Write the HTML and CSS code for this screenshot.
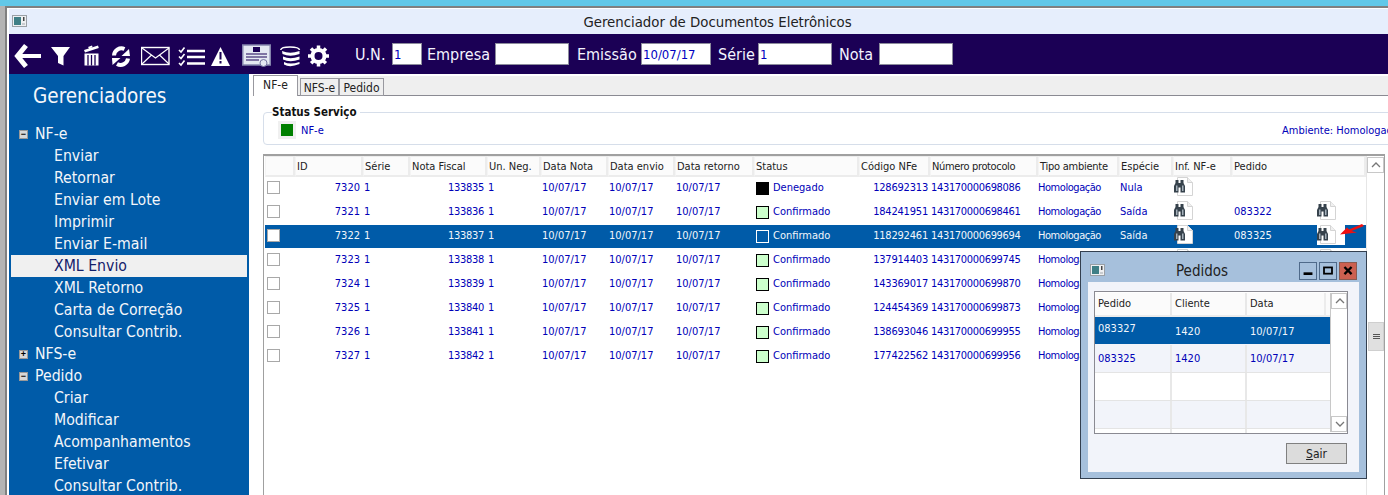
FILE: index.html
```html
<!DOCTYPE html>
<html lang="pt">
<head>
<meta charset="utf-8">
<title>Gerenciador de Documentos Eletrônicos</title>
<link rel="stylesheet" href="styles.css">
</head>
<body>
<svg class="defs" width="0" height="0">
  <defs>
    <symbol id="binoc" viewBox="0 0 20 20">
      <path d="M3.500 .5H13.500L18.500 5.500V18.500H3.500Z" fill="#fff" stroke="#d4d4d4"/>
      <path d="M13.500 .5V5.500H18.500" fill="#f0f0f0" stroke="#d4d4d4"/>
      <path d="M1.500 3H4.500V6H6.500V3H9.500V6L11 9V15.500H6.500V10.500H4.500V15.500H0V9L1.500 6Z" fill="#36424c"/>
      <path d="M2 8.500H3.500V14H2ZM8 8.500H9.500V14H8Z" fill="#a4b0ba"/>
    </symbol>
    <symbol id="winicon" viewBox="0 0 15 12">
      <rect x=".5" y=".5" width="14" height="11" fill="#eef0f2" stroke="#9aa0a6"/>
      <rect x="2" y="2" width="7" height="8" fill="#3f7f86"/>
      <rect x="11" y="2" width="1.500" height="4" fill="#444"/>
      <rect x="10" y="8" width="3" height="2" fill="#c8ccd0"/>
    </symbol>
  </defs>
</svg>

<div class="screen">
  <div class="desktop-strip"></div>
  <div class="window">
    <header class="titlebar">
      <svg class="win-icon"><use href="#winicon"/></svg>
      <span class="title-text">Gerenciador de Documentos Eletrônicos</span>
    </header>

    <div class="toolbar">
      <div class="tool-icons">
        <svg class="slot s-back" viewBox="0 0 42 40"><path d="M10 20H32V24H10Z" fill="#fff"/><path d="M17 11.500L8.500 22L17 32.500" fill="none" stroke="#fff" stroke-width="5"/></svg>
        <svg class="slot s-filter" viewBox="0 0 32 40"><path d="M0 13H19L12.500 22V31.500L7 29V22Z" fill="#fff"/></svg>
        <svg class="slot s-trash" viewBox="0 0 28 40"><path d="M1 16L15 11.500L15.800 14L2 18.500Z M5 13L9 11.500L9.500 13L6 14.500Z M1.500 19.500H15.500V31.500H1.500Z" fill="#fff"/><path d="M5 21V31.500M8.500 21V31.500M12 21V31.500" stroke="#1b0055" stroke-width="1.300"/></svg>
        <svg class="slot s-sync" viewBox="0 0 30 40"><path d="M3 21.500A7.500 7.500 0 0 1 13.500 15" fill="none" stroke="#fff" stroke-width="4"/><path d="M19 22H10.500L18 15Z" fill="#fff"/><path d="M17 24.500A7.500 7.500 0 0 1 6 30" fill="none" stroke="#fff" stroke-width="4"/><path d="M1 24H9.500L1.500 31Z" fill="#fff"/></svg>
        <svg class="slot s-mail" viewBox="0 0 37 40"><rect x=".5" y="13.500" width="27.500" height="17" fill="#1b0055" stroke="#fff" stroke-width="1.400"/><path d="M1 14L14.500 24L28 14M1 30L10.500 21M28 30L18.500 21" fill="none" stroke="#fff" stroke-width="1.200"/></svg>
        <svg class="slot s-list" viewBox="0 0 33 40"><path d="M1 16L3 18L6.500 13.500M1 22.500L3 24.500L6.500 20M1 29L3 31L6.500 26.500" fill="none" stroke="#fff" stroke-width="1.600"/><path d="M9 17H27M9 23H27M9 29.500H27" stroke="#fff" stroke-width="2.400"/></svg>
        <svg class="slot s-warn" viewBox="0 0 31 40"><path d="M9.500 13L0 32H19Z" fill="#fff"/><path d="M8.500 18H10.500V25.500H8.500ZM8.500 27H10.500V29.500H8.500Z" fill="#1b0055"/></svg>
        <svg class="slot s-cert" viewBox="0 0 38 40"><rect x=".75" y="11" width="27.500" height="20" fill="#e4e8f2" stroke="#8484ac" stroke-width="1.500"/><rect x="11" y="13" width="7" height="5" fill="#1b0055"/><path d="M4 20H25M4 23H25M4 26H17" stroke="#1b0055" stroke-width="1.100"/><circle cx="21.500" cy="29" r="3.500" fill="#e4e8f2" stroke="#7474a0"/></svg>
        <svg class="slot s-db" viewBox="0 0 28 40"><path d="M.7 16Q1 13 10 13Q19 13 19.500 16" fill="none" stroke="#fff" stroke-width="1.500"/><path d="M2 17Q10 20.500 19.500 17V20Q10 23.500 2.500 20ZM3 22.500Q10 26 19.500 22.500V25.500Q10 29 3 25.500ZM4 28Q10 31 19.500 28V30Q10 34 4 30.500Z" fill="#fff"/></svg>
        <svg class="slot s-gear" viewBox="0 0 26 40"><circle cx="10.500" cy="22" r="6" fill="none" stroke="#fff" stroke-width="4"/><path d="M10.500 11.500V32.500M0 22H21M3 14.500L18 29.500M18 14.500L3 29.500" stroke="#fff" stroke-width="3.500" stroke-dasharray="3.500 14 3.500"/></svg>
      </div>
      <div class="filters">
        <label class="f-label l-un">U.N.</label><input class="f-input w-un" value="1">
        <label class="f-label l-emp">Empresa</label><input class="f-input w-emp">
        <label class="f-label l-data">Emissão</label><input class="f-input w-date" value="10/07/17">
        <label class="f-label l-serie">Série</label><input class="f-input w-serie" value="1">
        <label class="f-label l-nota">Nota</label><input class="f-input w-nota">
      </div>
    </div>

    <div class="body">
      <nav class="sidebar">
        <h2 class="side-title">Gerenciadores</h2>
        <ul class="tree">
          <li class="node"><span class="exp">−</span>NF-e</li>
          <li class="leaf">Enviar</li>
          <li class="leaf">Retornar</li>
          <li class="leaf">Enviar em Lote</li>
          <li class="leaf">Imprimir</li>
          <li class="leaf">Enviar E-mail</li>
          <li class="leaf selected">XML Envio</li>
          <li class="leaf">XML Retorno</li>
          <li class="leaf">Carta de Correção</li>
          <li class="leaf">Consultar Contrib.</li>
          <li class="node"><span class="exp">+</span>NFS-e</li>
          <li class="node"><span class="exp">−</span>Pedido</li>
          <li class="leaf">Criar</li>
          <li class="leaf">Modificar</li>
          <li class="leaf">Acompanhamentos</li>
          <li class="leaf">Efetivar</li>
          <li class="leaf">Consultar Contrib.</li>
        </ul>
      </nav>

      <main class="content">
        <div class="tabs">
          <div class="tab active">NF-e</div>
          <div class="tab t-nfs">NFS-e</div>
          <div class="tab t-ped">Pedido</div>
        </div>

        <fieldset class="status-box">
          <legend class="status-legend">Status Serviço</legend>
          <div class="status-row">
            <span class="status-chip"><span class="status-green"></span></span>
            <span class="status-name">NF-e</span>
            <span class="ambiente">Ambiente: Homologação</span>
          </div>
        </fieldset>

        <div class="grid-frame">
          <div class="grid-cols">
            <div class="row head">
              <span></span><span>ID</span><span>Série</span><span>Nota Fiscal</span><span>Un. Neg.</span><span>Data Nota</span><span>Data envio</span><span>Data retorno</span><span>Status</span><span>Código NFe</span><span>Número protocolo</span><span>Tipo ambiente</span><span>Espécie</span><span>Inf. NF-e</span><span>Pedido</span>
            </div>
            <div class="row data">
              <span><i class="check"></i></span><span class="num">7320</span><span>1</span><span class="num">133835</span><span>1</span><span>10/07/17</span><span>10/07/17</span><span>10/07/17</span><span class="st"><i class="sw black"></i>Denegado</span><span class="num">128692313</span><span>143170000698086</span><span>Homologação</span><span>Nula</span><span class="ic"><svg class="bin"><use href="#binoc"/></svg></span><span></span>
            </div>
            <div class="row data">
              <span><i class="check"></i></span><span class="num">7321</span><span>1</span><span class="num">133836</span><span>1</span><span>10/07/17</span><span>10/07/17</span><span>10/07/17</span><span class="st"><i class="sw"></i>Confirmado</span><span class="num">184241951</span><span>143170000698461</span><span>Homologação</span><span>Saída</span><span class="ic"><svg class="bin"><use href="#binoc"/></svg></span><span class="ped">083322<svg class="bin"><use href="#binoc"/></svg></span>
            </div>
            <div class="row data sel">
              <span><i class="check"></i></span><span class="num">7322</span><span>1</span><span class="num">133837</span><span>1</span><span>10/07/17</span><span>10/07/17</span><span>10/07/17</span><span class="st"><i class="sw blue"></i>Confirmado</span><span class="num">118292461</span><span>143170000699694</span><span>Homologação</span><span>Saída</span><span class="ic"><svg class="bin"><use href="#binoc"/></svg></span><span class="ped">083325<span class="bin-white"><svg class="bin"><use href="#binoc"/></svg></span></span>
            </div>
            <div class="row data">
              <span><i class="check"></i></span><span class="num">7323</span><span>1</span><span class="num">133838</span><span>1</span><span>10/07/17</span><span>10/07/17</span><span>10/07/17</span><span class="st"><i class="sw"></i>Confirmado</span><span class="num">137914403</span><span>143170000699745</span><span>Homologação</span><span></span><span class="ic"><svg class="bin"><use href="#binoc"/></svg></span><span class="ped"><svg class="bin"><use href="#binoc"/></svg></span>
            </div>
            <div class="row data">
              <span><i class="check"></i></span><span class="num">7324</span><span>1</span><span class="num">133839</span><span>1</span><span>10/07/17</span><span>10/07/17</span><span>10/07/17</span><span class="st"><i class="sw"></i>Confirmado</span><span class="num">143369017</span><span>143170000699870</span><span>Homologação</span><span></span><span></span><span></span>
            </div>
            <div class="row data">
              <span><i class="check"></i></span><span class="num">7325</span><span>1</span><span class="num">133840</span><span>1</span><span>10/07/17</span><span>10/07/17</span><span>10/07/17</span><span class="st"><i class="sw"></i>Confirmado</span><span class="num">124454369</span><span>143170000699873</span><span>Homologação</span><span></span><span></span><span></span>
            </div>
            <div class="row data">
              <span><i class="check"></i></span><span class="num">7326</span><span>1</span><span class="num">133841</span><span>1</span><span>10/07/17</span><span>10/07/17</span><span>10/07/17</span><span class="st"><i class="sw"></i>Confirmado</span><span class="num">138693046</span><span>143170000699955</span><span>Homologação</span><span></span><span></span><span></span>
            </div>
            <div class="row data">
              <span><i class="check"></i></span><span class="num">7327</span><span>1</span><span class="num">133842</span><span>1</span><span>10/07/17</span><span>10/07/17</span><span>10/07/17</span><span class="st"><i class="sw"></i>Confirmado</span><span class="num">177422562</span><span>143170000699956</span><span>Homologação</span><span></span><span></span><span></span>
            </div>
          </div>
          <div class="vscroll">
            <div class="sb-btn"><svg viewBox="0 0 16 14" class="chev"><path d="M4 9L8 5L12 9" fill="none" stroke="#777" stroke-width="1.300"/></svg></div>
            <div class="thumb"><i></i><i></i><i></i></div>
          </div>
        </div>
      </main>
    </div>
  </div>

  <svg class="arrow" viewBox="0 0 26 12"><path d="M1 10.500L8 3.500L10 5.500L23 0L25 2L12.500 7L18 8.500Z" fill="#f01010"/></svg>

  <section class="dialog">
    <div class="dlg-title">
      <svg class="dlg-icon"><use href="#winicon"/></svg>
      <span class="dlg-text">Pedidos</span>
      <div class="dlg-btns">
        <span class="dlg-btn"><svg viewBox="0 0 18 17"><rect x="4" y="10" width="10" height="3" fill="#000"/></svg></span>
        <span class="dlg-btn"><svg viewBox="0 0 18 17"><rect x="4.500" y="4.500" width="9" height="7" fill="none" stroke="#000" stroke-width="2"/></svg></span>
        <span class="dlg-btn close"><svg viewBox="0 0 18 17"><path d="M5 4L13 12M13 4L5 12" stroke="#000" stroke-width="2.600"/></svg></span>
      </div>
    </div>
    <div class="dlg-client">
      <div class="dlg-grid">
        <div class="dlg-table">
          <div class="drow dhead"><span>Pedido</span><span>Cliente</span><span>Data</span></div>
          <div class="drow dsel"><span class="raised">083327</span><span>1420</span><span>10/07/17</span></div>
          <div class="drow dalt"><span>083325</span><span>1420</span><span>10/07/17</span></div>
          <div class="drow"><span></span><span></span><span></span></div>
          <div class="drow dalt"><span></span><span></span><span></span></div>
          <div class="drow"><span></span><span></span><span></span></div>
        </div>
        <div class="dscroll">
          <div class="sb-btn"><svg viewBox="0 0 16 14" class="chev"><path d="M4 9L8 5L12 9" fill="none" stroke="#777" stroke-width="1.300"/></svg></div>
          <div class="sb-btn bottom"><svg viewBox="0 0 16 14" class="chev"><path d="M4 5L8 9L12 5" fill="none" stroke="#777" stroke-width="1.300"/></svg></div>
        </div>
      </div>
      <div class="dlg-actions"><button class="btn-sair"><u>S</u>air</button></div>
    </div>
  </section>
</div>
</body>
</html>
```

FILE: styles.css
```css
* { box-sizing: border-box; }
html, body { margin: 0; padding: 0; }
body {
  width: 1388px; height: 495px; overflow: hidden;
  font-family: "DejaVu Sans Condensed", "DejaVu Sans", sans-serif;
  font-stretch: condensed;
  background: #fff;
}
.defs { position: absolute; }
.screen { position: relative; width: 1388px; height: 495px; overflow: hidden; background: #b4b4b4; }
.desktop-strip { height: 6px; background: #62c8e8; }
.window {
  margin-left: 5px; height: 489px;
  border-top: 2px solid #808080; border-left: 2px solid #808080;
  padding: 1px 0 0 2px; background: #fff;
  display: flex; flex-direction: column;
}
.titlebar {
  height: 25px; background: #e6eefc; position: relative; flex: none;
  display: flex; align-items: center; justify-content: center;
  font-size: 14.800px; color: #222;
}
.title-text { margin-left: 38px; }
.win-icon { position: absolute; left: 3px; top: 6px; width: 15px; height: 12px; }
.toolbar { height: 40px; background: #1b0055; display: flex; flex: none; color: #fff; }
.tool-icons { display: flex; }
.slot { height: 40px; display: block; flex: none; }
.s-back { width: 42px; }
.s-filter { width: 32px; }
.s-trash { width: 28px; }
.s-sync { width: 30px; }
.s-mail { width: 37px; }
.s-list { width: 33px; }
.s-warn { width: 31px; }
.s-cert { width: 38px; }
.s-db { width: 28px; }
.s-gear { width: 26px; }
.filters { display: flex; align-items: center; padding-left: 21px; }
.f-label { font-size: 16px; color: #f4f4ff; flex: none; white-space: nowrap; }
.l-un { width: 37px; }
.l-emp { width: 68px; margin-left: 5px; }
.l-data { width: 64px; margin-left: 8px; }
.l-serie { width: 40px; margin-left: 7px; }
.l-nota { width: 40px; margin-left: 7px; }
.f-input {
  height: 22px; border: 1px solid #8c8c9c; background: #fff; color: #0000c0; flex: none;
  font: 13px "DejaVu Sans Condensed", "DejaVu Sans", sans-serif; padding: 0 1px; outline: none;
}
.w-un { width: 30px; }
.w-emp { width: 74px; }
.w-date { width: 70px; }
.w-serie { width: 74px; }
.w-nota { width: 74px; }

.body { display: flex; flex: 1; min-height: 0; }
.sidebar { width: 240px; flex: none; background: #005ba8; color: #f4f6fa; }
.side-title { margin: 0; height: 49px; padding: 8px 0 0 24px; font-size: 20.500px; line-height: 28px; font-weight: 400; }
.tree { list-style: none; margin: 0; padding: 0; font-size: 15.700px; }
.tree li { height: 22px; line-height: 22px; white-space: nowrap; }
.node { padding-left: 10px; display: flex; align-items: center; }
.exp {
  width: 9px; height: 9px; background: #d8d8d8; border: 1px solid #999; color: #000;
  font: 700 9px/7px "Liberation Sans", sans-serif; text-align: center;
  margin-right: 7px; flex: none;
}
.leaf { padding-left: 45px; }
.leaf.selected { background: #f0f0f0; color: #14206a; margin: 0 2px; padding-left: 43px; }

.content { flex: 1; min-width: 0; padding: 2px 0 0 4px; overflow: hidden; background: #fff; }
.tabs { display: flex; height: 20px; background: #efefef; border-bottom: 1px solid #8a8a92; align-items: flex-end; }
.tab {
  height: 18px; margin-bottom: -1px; font-size: 12px; line-height: 18px; text-align: center;
  border: 1px solid #98989f; background: #efefef; color: #222;
}
.t-nfs { width: 39px; margin-left: 2px; }
.t-ped { width: 45px; }
.tab.active { width: 45px; height: 21px; line-height: 19px; background: #fff; border-bottom: 0; margin-bottom: -1px; z-index: 1; }
.status-box {
  margin: 10px -40px 0 10px; padding: 0 0 0 8px; height: 39px;
  border: 1px solid #d6deea; border-radius: 4px;
}
.status-legend { font-size: 11.500px; font-weight: 700; color: #111; padding: 0 3px 0 0; line-height: 12px; }
.status-row { display: flex; align-items: center; height: 18px; margin-top: 3px; position: relative; font-size: 11px; color: #0000b8; }
.status-chip { width: 18px; height: 18px; background: #f0f0f0; display: flex; align-items: center; justify-content: center; margin-left: 6px; }
.status-green { width: 12px; height: 12px; background: #008000; }
.status-name { margin-left: 5px; }
.ambiente { position: absolute; left: 1010px; white-space: nowrap; }

.grid-frame {
  margin: 9px 3px 0 10px; height: 350px; border: 1px solid #a0a0a0; border-top-width: 2px; border-bottom: 0;
  display: flex; padding-left: 1px;
}
.grid-cols { width: 1101px; flex: none; }
.row {
  display: grid;
  grid-template-columns: 30px 68px 47px 77px 54px 67px 67px 79px 105px 71px 108px 81px 54px 59px 134px;
  font-size: 11px; white-space: nowrap;
}
.head { height: 21px; line-height: 20px; color: #222; background: #fbfbfb; }
.head span { border-right: 2px solid #ececec; border-left: 1px solid #f4f4f4; border-top: 1px solid #ececec; border-bottom: 2px solid #ececec; padding-left: 1px; overflow: hidden; }
.head span:nth-child(11) { letter-spacing: -.35px; }
.head span:nth-child(12) { letter-spacing: -.25px; }
.data { height: 24px; line-height: 22px; color: #0000b8; }
.data span { padding-left: 1px; position: relative; }
.data span:nth-child(4) { letter-spacing: -.3px; }
.data span:nth-child(10) { letter-spacing: -.2px; padding-right: 2px; }
.data span:nth-child(11) { letter-spacing: -.33px; }
.data span:nth-child(12) { letter-spacing: -.45px; padding-left: 0; }
.data .num { text-align: right; padding-right: 3px; padding-left: 0; }
.data.sel { background: #005ba8; color: #f2f6fb; height: 23px; margin-bottom: 1px; }
.check { display: block; width: 13px; height: 13px; margin: 4px 0 0 1px; border: 1px solid #a8a8a8; background: #fff; }
.data .st { display: flex; align-items: flex-start; line-height: 22px; }
.sw { width: 13px; height: 13px; margin: 5px 4px 0 1px; border: 1px solid #000; background: #ccffcc; flex: none; }
.sw.black { background: #000; }
.sw.blue { background: #005ba8; border-color: #fff; }
.bin { width: 20px; height: 20px; display: block; }
.ic .bin { position: absolute; left: 1px; top: 0; }
.data .ped { padding-left: 2px; }
.ped > .bin { position: absolute; left: 85px; top: 0; }
.data .bin-white { position: absolute; left: 85px; top: -1px; width: 28px; height: 21px; background: #fff; padding: 1px 0 0 0; }
.vscroll { width: 18px; flex: none; border-left: 1px solid #e6e6e6; position: relative; }
.sb-btn { height: 16px; border: 1px solid #c8c8c8; background: #fff; margin: 1px 0 0 0; }
.chev { display: block; width: 16px; height: 14px; }
.thumb {
  position: absolute; left: 1px; top: 166px; width: 16px; height: 29px; background: #e0e0e0; border: 1px solid #cfcfcf;
  display: flex; flex-direction: column; align-items: center; justify-content: center; gap: 1px;
}
.thumb i { display: block; width: 7px; height: 1px; background: #555; }

.arrow { position: absolute; left: 1339px; top: 224px; width: 26px; height: 12px; }

.dialog {
  position: absolute; left: 1080px; top: 251px; width: 287px; height: 228px;
  background: #a6c0dc; border: 1px solid #333f4f; padding: 30px 7px 7px 7px;
}
.dlg-title { position: absolute; left: 0; top: 0; right: 0; height: 30px; }
.dlg-icon { position: absolute; left: 9px; top: 12px; width: 15px; height: 12px; }
.dlg-text { position: absolute; left: 95px; top: 9px; font-size: 15px; line-height: 20px; color: #222; }
.dlg-btns { position: absolute; right: 9px; top: 10px; display: flex; gap: 2px; }
.dlg-btn { width: 18px; height: 18px; border: 1px solid #4f6a8a; background: #a6c0dc; display: block; }
.dlg-btn svg { display: block; width: 16px; height: 16px; }
.dlg-btn.close { background: #cc6050; border-color: #8a5a50; }
.dlg-client { height: 190px; background: #f2f4fa; padding: 9px 11px 0 6px; }
.dlg-grid { width: 254px; height: 143px; border: 1px solid #8a8a92; display: flex; background: #fff; }
.dlg-table { width: 235px; flex: none; overflow: hidden; padding-top: 1px; }
.drow {
  display: grid; grid-template-columns: 77px 75px 83px; height: 28px; font-size: 11px; line-height: 27px;
  color: #0000b8; border-bottom: 1px solid #e4e4e4;
}
.drow span { border-right: 2px solid #e8e8e8; padding-left: 3px; }
.drow span:last-child { border-right: 0; }
.dhead { height: 24px; line-height: 22px; color: #222; background: #fbfbfb; border-bottom: 2px solid #ececec; }
.dhead span:last-child { border-right: 2px solid #ececec; margin-right: 4px; }
.dsel { background: #005ba8; color: #f2f6fb; border-bottom: 1px solid #f2f4fa; }
.dsel span { border-right: 0; padding-top: 1px; }
.dsel .raised { line-height: 21px; }
.dalt { background: #f2f4fa; }
.dscroll { width: 17px; flex: none; border-left: 1px solid #c8c8c8; display: flex; flex-direction: column; justify-content: space-between; margin: 1px 0; }
.dscroll .sb-btn { margin: 0; height: 16px; }
.dlg-actions { display: flex; justify-content: flex-end; padding: 9px 1px 0 0; }
.btn-sair {
  width: 61px; height: 21px; background: #dcdcdc; border: 1px solid #808080; color: #222;
  font: 12px "DejaVu Sans Condensed", "DejaVu Sans", sans-serif; padding: 0;
}
```
